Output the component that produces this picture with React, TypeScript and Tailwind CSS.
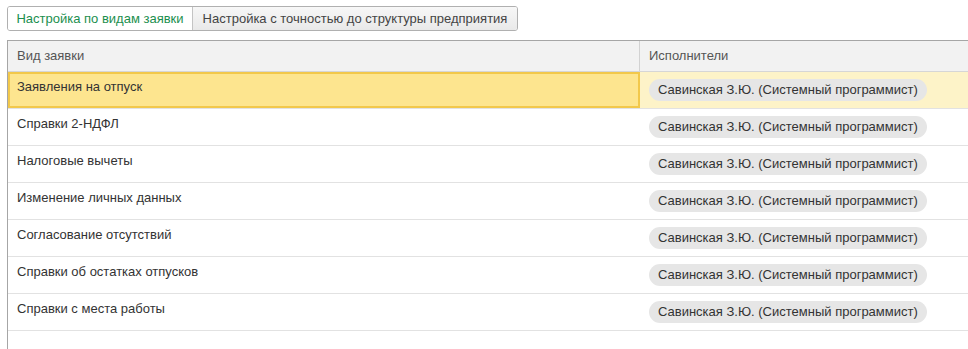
const rows = [
  'Заявления на отпуск',
  'Справки 2-НДФЛ',
  'Налоговые вычеты',
  'Изменение личных данных',
  'Согласование отсутствий',
  'Справки об остатках отпусков',
  'Справки с места работы',
]

const executor = 'Савинская З.Ю. (Системный программист)'

export default function App() {
  return (
    <div
      className="w-[968px] h-[349px] overflow-hidden bg-white pt-[6px] pl-[7px] text-[13px] text-[#333]"
      style={{ fontFamily: '"Liberation Sans", Arial, sans-serif' }}
    >
      {/* Вкладки */}
      <div className="flex w-[511px] h-[25px] border border-[#b0b0b0] rounded-[3px] overflow-hidden">
        <div className="w-[185px] flex items-center justify-center bg-white text-[#1b8f4e] border-r border-[#c4c4c4]">
          Настройка по видам заявки
        </div>
        <div className="flex-1 flex items-center justify-center bg-gradient-to-b from-[#f7f7f7] to-[#e9e9e9] text-[#444]">
          Настройка с точностью до структуры предприятия
        </div>
      </div>

      {/* Таблица */}
      <div className="mt-[9px] w-[1000px] h-[400px] border-t border-l border-[#a6a6a6]">
        <div className="flex h-[31px] bg-[#f2f2f2] border-b border-[#d6d6d6] text-[#555]">
          <div className="w-[632px] flex items-center pl-[9px] border-r border-[#d2d2d2]">Вид заявки</div>
          <div className="flex-1 flex items-center pl-[9px]">Исполнители</div>
        </div>
        {rows.map((name, i) => {
          const selected = i === 0
          return (
            <div
              key={name}
              className={
                'flex h-[37px] border-b border-[#e2e2e2] ' + (selected ? 'bg-[#fdf3c8]' : 'bg-white')
              }
            >
              <div
                className={
                  'w-[632px] flex items-center pb-[6px] ' +
                  (selected ? 'bg-[#fde58f] border-2 border-[#f2c84b] pl-[7px]' : 'pl-[9px]')
                }
              >
                {name}
              </div>
              <div className="flex-1 flex items-center pl-[9px]">
                <span className="h-[22px] flex items-center px-[9px] rounded-full bg-[#e6e6e6] text-[#333]">
                  {executor}
                </span>
              </div>
            </div>
          )
        })}
      </div>
    </div>
  )
}
